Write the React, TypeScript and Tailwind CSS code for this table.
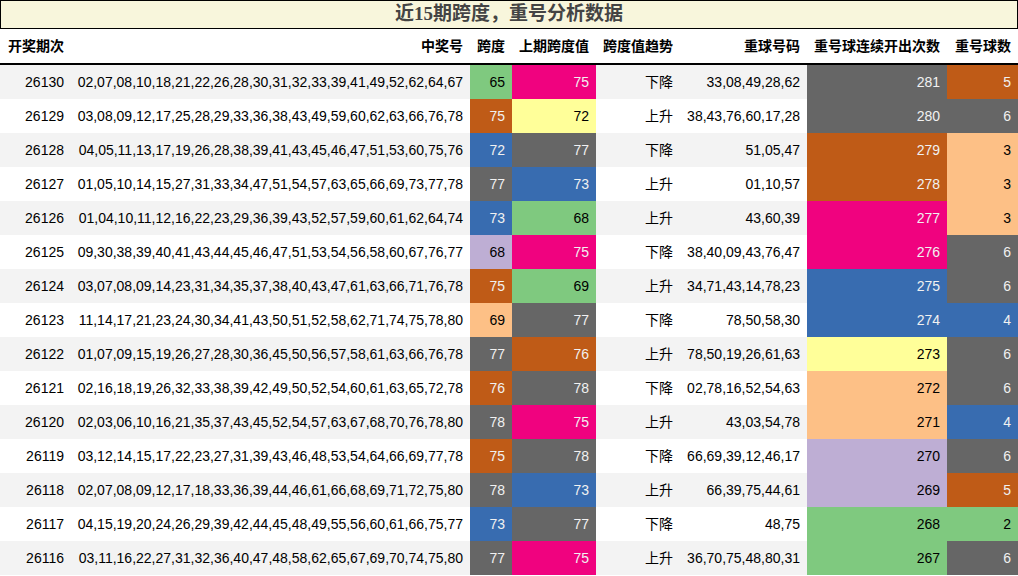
import React from 'react'

type Tone = 'green' | 'lav' | 'peach' | 'yellow' | 'blue' | 'pink' | 'brown' | 'gray'

// Accent palette, dark tones get light text
const toneClass: Record<Tone, string> = {
  green: 'bg-[#7fc97f] text-black',
  lav: 'bg-[#beaed4] text-black',
  peach: 'bg-[#fdc086] text-black',
  yellow: 'bg-[#ffff99] text-black',
  blue: 'bg-[#386cb0] text-[#f1f1f1]',
  pink: 'bg-[#f0027f] text-[#f1f1f1]',
  brown: 'bg-[#bf5b17] text-[#f1f1f1]',
  gray: 'bg-[#666666] text-[#f1f1f1]'
}

interface Row {
  issue: string
  nums: string
  span: [number, Tone]
  prev: [number, Tone]
  trend: string
  repeat: string
  streak: [number, Tone]
  count: [number, Tone]
}

const rows: Row[] = [
  { issue: '26130', nums: '02,07,08,10,18,21,22,26,28,30,31,32,33,39,41,49,52,62,64,67', span: [65, 'green'], prev: [75, 'pink'], trend: '下降', repeat: '33,08,49,28,62', streak: [281, 'gray'], count: [5, 'brown'] },
  { issue: '26129', nums: '03,08,09,12,17,25,28,29,33,36,38,43,49,59,60,62,63,66,76,78', span: [75, 'brown'], prev: [72, 'yellow'], trend: '上升', repeat: '38,43,76,60,17,28', streak: [280, 'gray'], count: [6, 'gray'] },
  { issue: '26128', nums: '04,05,11,13,17,19,26,28,38,39,41,43,45,46,47,51,53,60,75,76', span: [72, 'blue'], prev: [77, 'gray'], trend: '下降', repeat: '51,05,47', streak: [279, 'brown'], count: [3, 'peach'] },
  { issue: '26127', nums: '01,05,10,14,15,27,31,33,34,47,51,54,57,63,65,66,69,73,77,78', span: [77, 'gray'], prev: [73, 'blue'], trend: '上升', repeat: '01,10,57', streak: [278, 'brown'], count: [3, 'peach'] },
  { issue: '26126', nums: '01,04,10,11,12,16,22,23,29,36,39,43,52,57,59,60,61,62,64,74', span: [73, 'blue'], prev: [68, 'green'], trend: '上升', repeat: '43,60,39', streak: [277, 'pink'], count: [3, 'peach'] },
  { issue: '26125', nums: '09,30,38,39,40,41,43,44,45,46,47,51,53,54,56,58,60,67,76,77', span: [68, 'lav'], prev: [75, 'pink'], trend: '下降', repeat: '38,40,09,43,76,47', streak: [276, 'pink'], count: [6, 'gray'] },
  { issue: '26124', nums: '03,07,08,09,14,23,31,34,35,37,38,40,43,47,61,63,66,71,76,78', span: [75, 'brown'], prev: [69, 'green'], trend: '上升', repeat: '34,71,43,14,78,23', streak: [275, 'blue'], count: [6, 'gray'] },
  { issue: '26123', nums: '11,14,17,21,23,24,30,34,41,43,50,51,52,58,62,71,74,75,78,80', span: [69, 'peach'], prev: [77, 'gray'], trend: '下降', repeat: '78,50,58,30', streak: [274, 'blue'], count: [4, 'blue'] },
  { issue: '26122', nums: '01,07,09,15,19,26,27,28,30,36,45,50,56,57,58,61,63,66,76,78', span: [77, 'gray'], prev: [76, 'brown'], trend: '上升', repeat: '78,50,19,26,61,63', streak: [273, 'yellow'], count: [6, 'gray'] },
  { issue: '26121', nums: '02,16,18,19,26,32,33,38,39,42,49,50,52,54,60,61,63,65,72,78', span: [76, 'brown'], prev: [78, 'gray'], trend: '下降', repeat: '02,78,16,52,54,63', streak: [272, 'peach'], count: [6, 'gray'] },
  { issue: '26120', nums: '02,03,06,10,16,21,35,37,43,45,52,54,57,63,67,68,70,76,78,80', span: [78, 'gray'], prev: [75, 'pink'], trend: '上升', repeat: '43,03,54,78', streak: [271, 'peach'], count: [4, 'blue'] },
  { issue: '26119', nums: '03,12,14,15,17,22,23,27,31,39,43,46,48,53,54,64,66,69,77,78', span: [75, 'brown'], prev: [78, 'gray'], trend: '下降', repeat: '66,69,39,12,46,17', streak: [270, 'lav'], count: [6, 'gray'] },
  { issue: '26118', nums: '02,07,08,09,12,17,18,33,36,39,44,46,61,66,68,69,71,72,75,80', span: [78, 'gray'], prev: [73, 'blue'], trend: '上升', repeat: '66,39,75,44,61', streak: [269, 'lav'], count: [5, 'brown'] },
  { issue: '26117', nums: '04,15,19,20,24,26,29,39,42,44,45,48,49,55,56,60,61,66,75,77', span: [73, 'blue'], prev: [77, 'gray'], trend: '下降', repeat: '48,75', streak: [268, 'green'], count: [2, 'green'] },
  { issue: '26116', nums: '03,11,16,22,27,31,32,36,40,47,48,58,62,65,67,69,70,74,75,80', span: [77, 'gray'], prev: [75, 'pink'], trend: '上升', repeat: '36,70,75,48,80,31', streak: [267, 'green'], count: [6, 'gray'] }
]

const headers = ['开奖期次', '中奖号', '跨度', '上期跨度值', '跨度值趋势', '重球号码', '重号球连续开出次数', '重号球数']

const gridCols = 'grid grid-cols-[71px_399px_42px_84px_84px_127px_140px_71px]'
const cell = 'flex items-center justify-end px-[7px] whitespace-nowrap'

function Cell({ children, tone }: { children: React.ReactNode; tone?: Tone }) {
  return <div className={`${cell} ${tone ? toneClass[tone] : ''}`}>{children}</div>
}

export default function App() {
  return (
    <div className="w-[1018px] bg-white text-[14px] text-black font-['Liberation_Sans','Noto_Sans_CJK_SC',sans-serif]">
      <div className="h-[29px] border border-black bg-[#f8f6dc] flex items-center justify-center">
        <span className="text-[19px] font-bold text-[#444444] font-['Liberation_Serif','Noto_Sans_CJK_SC',serif]">
          近15期跨度，重号分析数据
        </span>
      </div>

      <div className={`${gridCols} h-[36px] border-b-2 border-black font-bold`}>
        {headers.map((h) => (
          <div key={h} className={cell}>{h}</div>
        ))}
      </div>

      {rows.map((r, i) => (
        <div key={r.issue} className={`${gridCols} h-[34px] ${i % 2 === 0 ? 'bg-[#f3f3f3]' : 'bg-white'}`}>
          <Cell>{r.issue}</Cell>
          <Cell>{r.nums}</Cell>
          <Cell tone={r.span[1]}>{r.span[0]}</Cell>
          <Cell tone={r.prev[1]}>{r.prev[0]}</Cell>
          <Cell>{r.trend}</Cell>
          <Cell>{r.repeat}</Cell>
          <Cell tone={r.streak[1]}>{r.streak[0]}</Cell>
          <Cell tone={r.count[1]}>{r.count[0]}</Cell>
        </div>
      ))}
    </div>
  )
}
